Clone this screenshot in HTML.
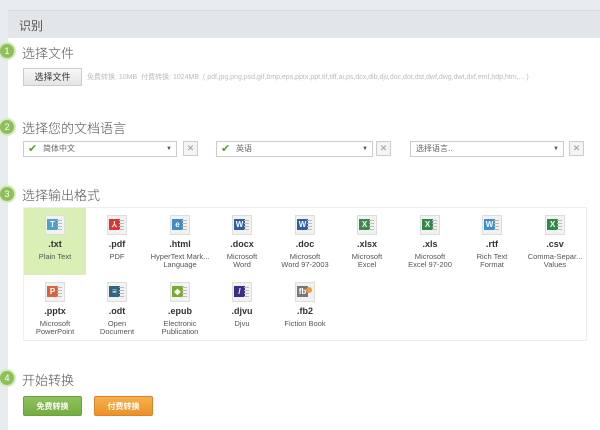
<!DOCTYPE html>
<html><head><meta charset="utf-8"><style>
*{margin:0;padding:0;box-sizing:border-box}
body{width:600px;height:418px;background:#e9ecef;font-family:"Liberation Sans","Noto Sans CJK SC",sans-serif;position:relative;overflow:hidden;color:#444}
.panel{position:absolute;left:8px;top:10px;width:600px;height:420px;background:#fff}
.hdr{position:absolute;left:8px;top:10px;width:600px;height:28px;background:#e3e6e9;border-top:1px solid #d8dbde}
.hdr span{position:absolute;left:11px;top:6px;font-size:12px;color:#555}
.step{position:absolute;left:-2px;width:18px;height:18px;border-radius:50%;background:#8dc05a;border:2px solid #d6eac0;color:#fff;font-size:9px;text-align:center;line-height:14px}
.tt{position:absolute;left:22px;font-size:13px;color:#555;font-weight:300}
.btn{position:absolute;left:23px;top:68px;width:59px;height:18px;border:1px solid #ccc;background:linear-gradient(#f8f8f8,#e4e4e4);font-size:9px;text-align:center;line-height:16px;color:#333}
.hint{position:absolute;left:87px;top:72px;font-size:7px;color:#bbb;white-space:nowrap}
.sel{position:absolute;top:141px;height:16px;border:1px solid #ccc;background:#fff;font-size:8px;line-height:14px;color:#666}
.sel .ck{color:#5a9e2a;font-size:11px;position:absolute;left:4px;top:0}
.sel .t{position:absolute;left:19px}
.sel .ar{position:absolute;right:4px;top:0;font-size:6px;color:#555}
.x{position:absolute;top:141px;width:15px;height:15px;border:1px solid #ccc;background:#f4f4f4;color:#999;font-size:9px;text-align:center;line-height:13px}
.grid{position:absolute;left:23px;top:207px;width:564px;height:134px;border:1px solid #eee}
.c{position:absolute;width:62px;height:67px;text-align:center}
.c.on{background:#d9efb5}
.ic{position:absolute;left:21px;top:7px;width:20px;height:20px;background:#f2f2f2;border:1px solid #ddd}
.ic b{position:absolute;left:1px;top:3px;width:11px;height:11px;color:#fff;font-size:8px;line-height:11px;text-align:center;font-weight:bold}
.ic i{position:absolute;right:2px;top:4px;width:5px;height:1px;background:#bbb;box-shadow:0 3px #bbb,0 6px #bbb,0 9px #bbb}
.e{position:absolute;left:0;right:0;top:31px;font-size:9px;font-weight:bold;color:#333}
.d{position:absolute;left:0;right:0;top:45px;font-size:7.5px;color:#555;line-height:8px}
.gb{position:absolute;top:396px;width:59px;height:20px;color:#fff;font-size:8px;font-weight:bold;text-align:center;line-height:20px;border-radius:2px}
</style></head><body>
<div class="panel"></div>
<div class="hdr"><span>识别</span></div>
<div class="step" style="top:42px">1</div><div class="tt" style="top:43px">选择文件</div>
<div class="btn">选择文件</div>
<div class="hint">免费转换: 10MB &nbsp;付费转换: 1024MB &nbsp;( pdf,jpg,png,psd,gif,bmp,eps,pptx,ppt,tif,tiff,ai,ps,dcx,dib,djv,doc,dot,dst,dwf,dwg,dwt,dxf,emf,hdp,htm,... )</div>
<div class="step" style="top:118px">2</div><div class="tt" style="top:118px">选择您的文档语言</div>
<div class="sel" style="left:23px;width:154px"><span class="ck">✔</span><span class="t">简体中文</span><span class="ar">▼</span></div>
<div class="x" style="left:183px">✕</div>
<div class="sel" style="left:216px;width:157px"><span class="ck">✔</span><span class="t">英语</span><span class="ar">▼</span></div>
<div class="x" style="left:376px">✕</div>
<div class="sel" style="left:410px;width:154px"><span class="t" style="left:5px">选择语言..</span><span class="ar">▼</span></div>
<div class="x" style="left:569px">✕</div>
<div class="step" style="top:185px">3</div><div class="tt" style="top:185px">选择输出格式</div>
<div class="grid">
<div class="c on" style="left:0;top:0"><div class="ic"><b style="background:#4ea1c9">T</b><i></i></div><div class="e">.txt</div><div class="d">Plain Text</div></div>
<div class="c" style="left:62px;top:0"><div class="ic"><b style="background:#d9362f">⅄</b><i></i></div><div class="e">.pdf</div><div class="d">PDF</div></div>
<div class="c" style="left:125px;top:0"><div class="ic"><b style="background:#3f8ac7">e</b><i></i></div><div class="e">.html</div><div class="d">HyperText Mark...<br>Language</div></div>
<div class="c" style="left:187px;top:0"><div class="ic"><b style="background:#2d5fa8">W</b><i></i></div><div class="e">.docx</div><div class="d">Microsoft<br>Word</div></div>
<div class="c" style="left:250px;top:0"><div class="ic"><b style="background:#2d5fa8">W</b><i></i></div><div class="e">.doc</div><div class="d">Microsoft<br>Word 97-2003</div></div>
<div class="c" style="left:312px;top:0"><div class="ic"><b style="background:#3c8a4f">X</b><i></i></div><div class="e">.xlsx</div><div class="d">Microsoft<br>Excel</div></div>
<div class="c" style="left:375px;top:0"><div class="ic"><b style="background:#2f8a45">X</b><i></i></div><div class="e">.xls</div><div class="d">Microsoft<br>Excel 97-200</div></div>
<div class="c" style="left:437px;top:0"><div class="ic"><b style="background:#3d8fd0">W</b><i></i></div><div class="e">.rtf</div><div class="d">Rich Text<br>Format</div></div>
<div class="c" style="left:500px;top:0"><div class="ic"><b style="background:#2f8a45">X</b><i></i></div><div class="e">.csv</div><div class="d">Comma-Separ...<br>Values</div></div>
<div class="c" style="left:0;top:67px"><div class="ic"><b style="background:#d9633a">P</b><i></i></div><div class="e">.pptx</div><div class="d">Microsoft<br>PowerPoint</div></div>
<div class="c" style="left:62px;top:67px"><div class="ic"><b style="background:#2e6580">≡</b><i></i></div><div class="e">.odt</div><div class="d">Open<br>Document</div></div>
<div class="c" style="left:125px;top:67px"><div class="ic"><b style="background:#7bab2e">◈</b><i></i></div><div class="e">.epub</div><div class="d">Electronic<br>Publication</div></div>
<div class="c" style="left:187px;top:67px"><div class="ic"><b style="background:#3a2e8c">/</b><i></i></div><div class="e">.djvu</div><div class="d">Djvu</div></div>
<div class="c" style="left:250px;top:67px"><div class="ic"><b style="background:#777">fb</b><i style="background:#f29a3a;box-shadow:none;width:6px;height:6px;border-radius:50%"></i></div><div class="e">.fb2</div><div class="d">Fiction Book</div></div>
</div>
<div class="step" style="top:369px">4</div><div class="tt" style="top:370px">开始转换</div>
<div class="gb" style="left:23px;background:linear-gradient(#8fc35d,#74ac41);border:1px solid #6fa03e">免费转换</div>
<div class="gb" style="left:94px;background:linear-gradient(#f6b04e,#ec9226);border:1px solid #d8852a">付费转换</div>
</body></html>
